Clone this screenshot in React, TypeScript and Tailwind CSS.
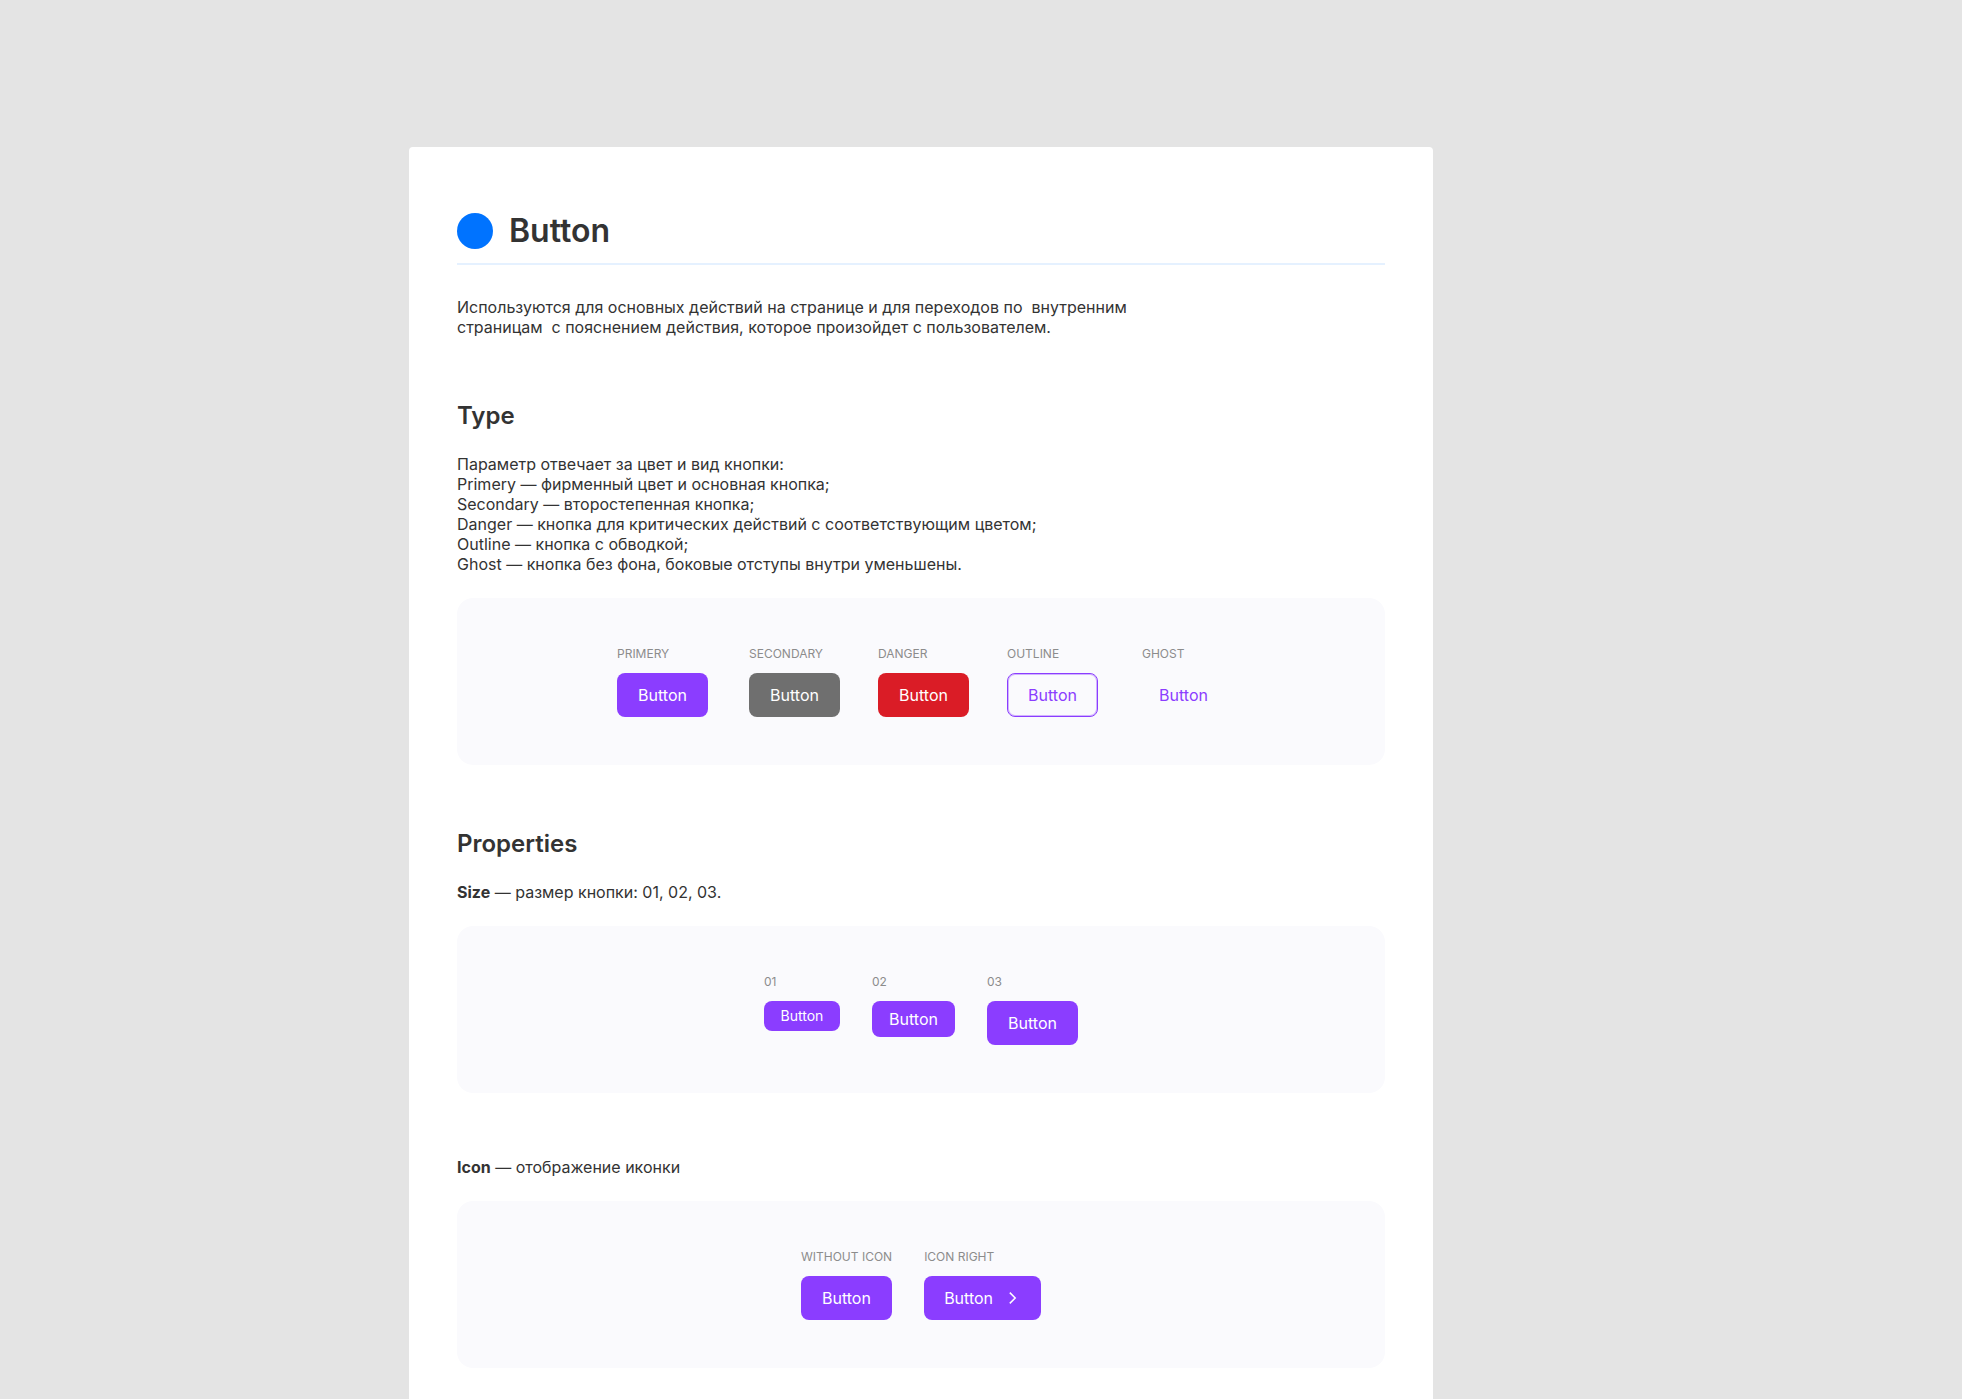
import type { ReactNode } from "react";
import clsx from "clsx";

type Variant = "primary" | "secondary" | "danger" | "outline" | "ghost";
type Size = "01" | "02" | "03";

const variants: Record<Variant, string> = {
  primary: "bg-[#8b3dff] text-white",
  secondary: "bg-[#6f6f6f] text-white",
  danger: "bg-[#da1c26] text-white",
  outline: "border border-[#8b3dff] text-[#8b3dff] inset-shadow-[0_0_0_1px_#8b3dff60]",
  ghost: "text-[#8b3dff]",
};

const sizes: Record<Size, string> = {
  "01": "h-[30px] min-w-[76px] text-sm",
  "02": "h-9 min-w-[83px] text-base",
  "03": "h-11 min-w-[91px] text-base",
};

function Chevron() {
  return (
    <svg
      aria-hidden="true"
      className="size-6"
      viewBox="0 0 24 24"
      fill="none"
      stroke="currentColor"
      strokeWidth="1.5"
    >
      <path d="M8.8 6.6 14.2 12l-5.4 5.4" />
    </svg>
  );
}

function Button({
  variant = "primary",
  size = "03",
  icon = false,
}: {
  variant?: Variant;
  size?: Size;
  icon?: boolean;
}) {
  return (
    <button
      type="button"
      className={clsx(
        "flex items-center justify-center gap-2 rounded-lg",
        variants[variant],
        variant === "ghost" ? "h-11 min-w-[83px] text-base" : sizes[size],
        icon && "pr-4 pl-5",
      )}
    >
      Button
      {icon && <Chevron />}
    </button>
  );
}

function Sample({ label, children }: { label: string; children: ReactNode }) {
  return (
    <div className="flex flex-col items-start gap-3">
      <span className="text-xs leading-[15px] text-[#8c8c8c]">{label}</span>
      {children}
    </div>
  );
}

function Panel({ children }: { children: ReactNode }) {
  return (
    <div className="mt-6 flex items-start justify-center gap-8 rounded-2xl bg-[#fafafd] py-12">
      {children}
    </div>
  );
}

export default function App() {
  return (
    <div className="flex min-h-screen flex-col bg-[#e4e4e4] pt-[147px] pl-[409px] font-['Inter',sans-serif] text-base leading-5 text-[#333333]">
      <main className="w-full max-w-[1024px] flex-1 rounded-t bg-white px-12 pt-16 pb-6">
        <header className="flex h-[54px] items-start gap-4 border-b-2 border-[#e5f1ff]">
          <span className="mt-0.5 size-9 rounded-full bg-[#0073ff]" />
          <h1 className="text-[32px] leading-10 font-semibold">Button</h1>
        </header>

        <p className="mt-8 whitespace-pre-wrap">
          Используются для основных действий на странице и для переходов по{"  "}внутренним
          <br />
          страницам{"  "}с пояснением действия, которое произойдет с пользователем.
        </p>

        <section className="mt-16">
          <h2 className="text-2xl leading-[29px] font-semibold">Type</h2>
          <p className="mt-6">
            Параметр отвечает за цвет и вид кнопки:
            <br />
            Primery — фирменный цвет и основная кнопка;
            <br />
            Secondary — второстепенная кнопка;
            <br />
            Danger — кнопка для критических действий с соответствующим цветом;
            <br />
            Outline — кнопка с обводкой;
            <br />
            Ghost — кнопка без фона, боковые отступы внутри уменьшены.
          </p>
          <Panel>
            <div className="grid grid-cols-[94px_91px_91px_97px_83px] gap-x-[38px]">
              <Sample label="PRIMERY">
                <Button />
              </Sample>
              <Sample label="SECONDARY">
                <Button variant="secondary" />
              </Sample>
              <Sample label="DANGER">
                <Button variant="danger" />
              </Sample>
              <Sample label="OUTLINE">
                <Button variant="outline" />
              </Sample>
              <Sample label="GHOST">
                <Button variant="ghost" />
              </Sample>
            </div>
          </Panel>
        </section>

        <section className="mt-16">
          <h2 className="text-2xl leading-[29px] font-semibold">Properties</h2>
          <p className="mt-6">
            <strong className="font-bold">Size</strong> — размер кнопки: 01, 02, 03.
          </p>
          <Panel>
            <Sample label="01">
              <Button size="01" />
            </Sample>
            <Sample label="02">
              <Button size="02" />
            </Sample>
            <Sample label="03">
              <Button />
            </Sample>
          </Panel>
          <p className="mt-16">
            <strong className="font-bold">Icon</strong> — отображение иконки
          </p>
          <Panel>
            <Sample label="WITHOUT ICON">
              <Button />
            </Sample>
            <Sample label="ICON RIGHT">
              <Button icon />
            </Sample>
          </Panel>
        </section>
      </main>
    </div>
  );
}
